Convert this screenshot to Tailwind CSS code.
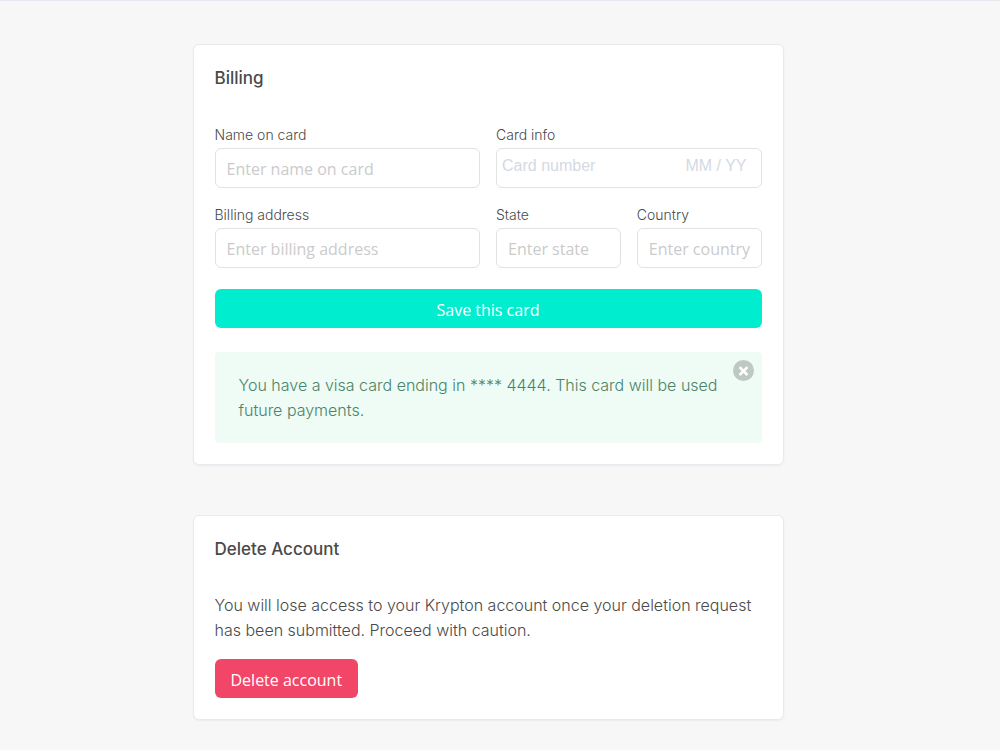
<!DOCTYPE html>
<html lang="en">
<head>
    <meta charset="UTF-8">
    <meta name="viewport" content="width=device-width, initial-scale=1.0">
    <title>Krypton - Billing</title>
    <script src="https://cdn.jsdelivr.net/npm/@tailwindcss/browser@4"></script>
</head>
<body class="bg-[#f7f7f7] text-[#4a4a4a] font-['Inter',sans-serif]">
    <div class="min-h-screen border-t border-[#e8e8f0]">
        <main class="max-w-[615px] mx-auto pt-[43px] pb-7 pr-6">
            <!-- Billing -->
            <section class="bg-white border border-[#e9eaf0] rounded-md shadow-xs p-[21px] mb-[50px]">
                <h2 class="text-[17px] leading-6 font-medium">Billing</h2>
                <form class="mt-[34px]" onsubmit="return false">
                    <div class="grid grid-cols-2 gap-4">
                        <div>
                            <label for="name" class="block text-sm leading-[21px] font-light">Name on card</label>
                            <input type="text" id="name" placeholder="Enter name on card" class="mt-[3px] block w-full h-10 pl-[11px] pr-1 pt-0.5 rounded-md border border-[#e2e2e2] font-['Open_Sans',sans-serif] text-base placeholder:text-[#cbcbcb]">
                        </div>
                        <div>
                            <label for="card" class="block text-sm leading-[21px] font-light">Card info</label>
                            <div class="mt-[3px] flex h-10 pl-[5px] pr-3.5 pb-1 rounded-md border border-[#e2e2e2] font-['Liberation_Sans',sans-serif] text-base">
                                <input type="text" id="card" placeholder="Card number" class="flex-1 min-w-0 placeholder:text-[#d3dae3]">
                                <input type="text" aria-label="Expiry date" placeholder="MM / YY" class="w-20 text-right placeholder:text-[#d3dae3]">
                            </div>
                        </div>
                        <div>
                            <label for="address" class="block text-sm leading-[21px] font-light">Billing address</label>
                            <input type="text" id="address" placeholder="Enter billing address" class="mt-[3px] block w-full h-10 pl-[11px] pr-1 pt-0.5 rounded-md border border-[#e2e2e2] font-['Open_Sans',sans-serif] text-base placeholder:text-[#cbcbcb]">
                        </div>
                        <div class="grid grid-cols-2 gap-4">
                            <div>
                                <label for="state" class="block text-sm leading-[21px] font-light">State</label>
                                <input type="text" id="state" placeholder="Enter state" class="mt-[3px] block w-full h-10 pl-[11px] pr-1 pt-0.5 rounded-md border border-[#e2e2e2] font-['Open_Sans',sans-serif] text-base placeholder:text-[#cbcbcb]">
                            </div>
                            <div>
                                <label for="country" class="block text-sm leading-[21px] font-light">Country</label>
                                <input type="text" id="country" placeholder="Enter country" class="mt-[3px] block w-full h-10 pl-[11px] pr-1 pt-0.5 rounded-md border border-[#e2e2e2] font-['Open_Sans',sans-serif] text-base placeholder:text-[#cbcbcb]">
                            </div>
                        </div>
                    </div>
                    <button type="submit" class="mt-[21px] block w-full h-[39px] pt-0.5 rounded-md bg-[#00edcf] text-white font-['Open_Sans',sans-serif] text-base">Save this card</button>
                </form>

                <!-- Saved card notice -->
                <div class="relative mt-6 pl-6 pr-10 pt-[21px] pb-5 rounded bg-[#effbf5] text-[#4a8468]">
                    <p class="text-base leading-[25px] font-light">You have a visa card ending in **** 4444. This card will be used future payments.</p>
                    <button aria-label="Remove card" class="absolute top-2 right-2 size-[21px] rounded-full bg-[#bfc9c4] text-white">
                        <svg viewBox="0 0 21 21" class="size-full" fill="none" stroke="currentColor" stroke-width="2.6">
                            <path d="M6.6 7.2l7.8 7.8M14.4 7.2l-7.8 7.8"/>
                        </svg>
                    </button>
                </div>
            </section>

            <!-- Delete Account -->
            <section class="bg-white border border-[#e9eaf0] rounded-md shadow-xs p-[21px]">
                <h2 class="text-[17px] leading-6 font-medium">Delete Account</h2>
                <p class="mt-8 text-base leading-[25px] font-light">You will lose access to your Krypton account once your deletion request has been submitted. Proceed with caution.</p>
                <button class="mt-4 h-[39px] px-4 pt-0.5 rounded-md bg-[#f14668] text-white font-['Open_Sans',sans-serif] text-base">Delete account</button>
            </section>
        </main>
    </div>
</body>
</html>
